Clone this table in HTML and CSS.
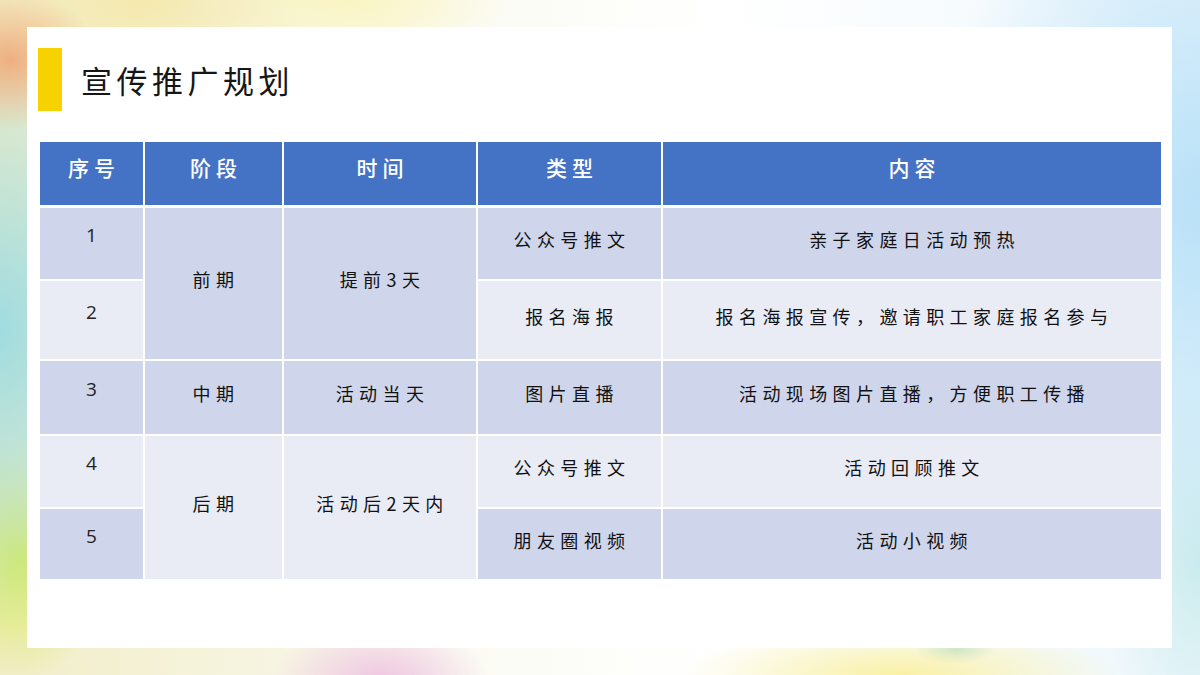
FILE: index.html
```html
<!DOCTYPE html>
<html lang="zh-CN">
<head>
<meta charset="utf-8">
<title>宣传推广规划</title>
<link rel="stylesheet" href="styles.css">
</head>
<body>
<div class="slide">
  <div class="card">
    <div class="title-row">
      <div class="title-bar"></div>
      <h1 class="title">宣传推广规划</h1>
    </div>
    <div class="table">
      <div class="th">序号</div>
      <div class="th">阶段</div>
      <div class="th">时间</div>
      <div class="th">类型</div>
      <div class="th">内容</div>

      <div class="td dark num">1</div>
      <div class="td dark span2">前期</div>
      <div class="td dark span2">提前3天</div>
      <div class="td dark">公众号推文</div>
      <div class="td dark">亲子家庭日活动预热</div>

      <div class="td light num">2</div>
      <div class="td light">报名海报</div>
      <div class="td light">报名海报宣传，邀请职工家庭报名参与</div>

      <div class="td dark num">3</div>
      <div class="td dark">中期</div>
      <div class="td dark">活动当天</div>
      <div class="td dark">图片直播</div>
      <div class="td dark">活动现场图片直播，方便职工传播</div>

      <div class="td light num">4</div>
      <div class="td light span2">后期</div>
      <div class="td light span2">活动后2天内</div>
      <div class="td light">公众号推文</div>
      <div class="td light">活动回顾推文</div>

      <div class="td dark num">5</div>
      <div class="td dark">朋友圈视频</div>
      <div class="td dark">活动小视频</div>
    </div>
  </div>
</div>
</body>
</html>
```

FILE: styles.css
```css
html, body {
  margin: 0;
  padding: 0;
}

body {
  width: 1200px;
  height: 675px;
  overflow: hidden;
  font-family: "Noto Sans CJK SC", "Noto Sans", sans-serif;
}

.slide {
  width: 1200px;
  height: 675px;
  box-sizing: border-box;
  padding: 27px 28px 27px 27px;
  background:
    radial-gradient(ellipse 90px 70px at 10px 60px, rgba(240, 160, 110, 0.8), rgba(240, 160, 110, 0) 100%),
    radial-gradient(ellipse 170px 300px at 0px 330px, rgba(160, 220, 224, 1), rgba(160, 220, 224, 0) 100%),
    radial-gradient(ellipse 90px 120px at 20px 560px, rgba(215, 235, 90, 0.95), rgba(215, 235, 90, 0) 100%),
    radial-gradient(ellipse 110px 60px at 380px 680px, rgba(238, 195, 225, 0.95), rgba(238, 195, 225, 0) 100%),
    radial-gradient(ellipse 220px 50px at 900px 675px, rgba(250, 240, 160, 0.95), rgba(250, 240, 160, 0) 100%),
    radial-gradient(ellipse 40px 14px at 955px 650px, rgba(160, 215, 220, 0.8), rgba(160, 215, 220, 0) 100%),
    radial-gradient(ellipse 170px 90px at 140px 0px, rgba(245, 232, 170, 0.95), rgba(245, 232, 170, 0) 100%),
    radial-gradient(ellipse 160px 60px at 350px 0px, rgba(250, 245, 190, 0.9), rgba(250, 245, 190, 0) 100%),
    radial-gradient(ellipse 260px 400px at 1200px 200px, rgba(185, 225, 248, 1), rgba(185, 225, 248, 0) 100%),
    radial-gradient(ellipse 100px 200px at 1200px 560px, rgba(200, 235, 235, 0.9), rgba(200, 235, 235, 0) 100%),
    linear-gradient(90deg, #f1edc8 0%, #fbfbf4 40%, #ffffff 60%, #eef7fc 100%);
}

.card {
  width: 1145px;
  height: 621px;
  background: #ffffff;
  box-sizing: border-box;
  padding: 21px 11px 0 13px;
}

.title-row {
  display: flex;
  align-items: center;
  height: 63px;
  margin-left: -2px;
}

.title-bar {
  width: 24px;
  height: 63px;
  background: #f7d200;
  flex: none;
}

.title {
  margin: 0 0 0 19px;
  font-size: 31px;
  font-weight: 400;
  letter-spacing: 4.5px;
  color: #161616;
  line-height: 1;
}

.table {
  margin-top: 31px;
  width: 1121px;
  display: grid;
  grid-template-columns: 103px 137px 192px 183px 498px;
  grid-template-rows: 64px 71px 78px 73px 71px 70px;
  column-gap: 2px;
  row-gap: 2px;
}

.th {
  background: #4472c4;
  color: #ffffff;
  font-size: 21px;
  font-weight: 500;
  letter-spacing: 5px;
  display: flex;
  align-items: center;
  justify-content: center;
  padding-bottom: 13px;
  padding-left: 5px;
  box-sizing: border-box;
  margin-bottom: 1px;
}

.td {
  display: flex;
  align-items: center;
  justify-content: center;
  padding-bottom: 9px;
  padding-left: 5px;
  box-sizing: border-box;
  font-size: 18px;
  letter-spacing: 5.4px;
  color: #111111;
}

.td.num {
  font-family: "Open Sans", "Noto Sans", sans-serif;
  font-size: 19px;
  letter-spacing: 0;
  padding-left: 0;
  padding-bottom: 17px;
  color: #222222;
}

.dark {
  background: #cfd5ea;
}

.light {
  background: #e9ebf5;
}

.span2 {
  grid-row: span 2;
}
```
